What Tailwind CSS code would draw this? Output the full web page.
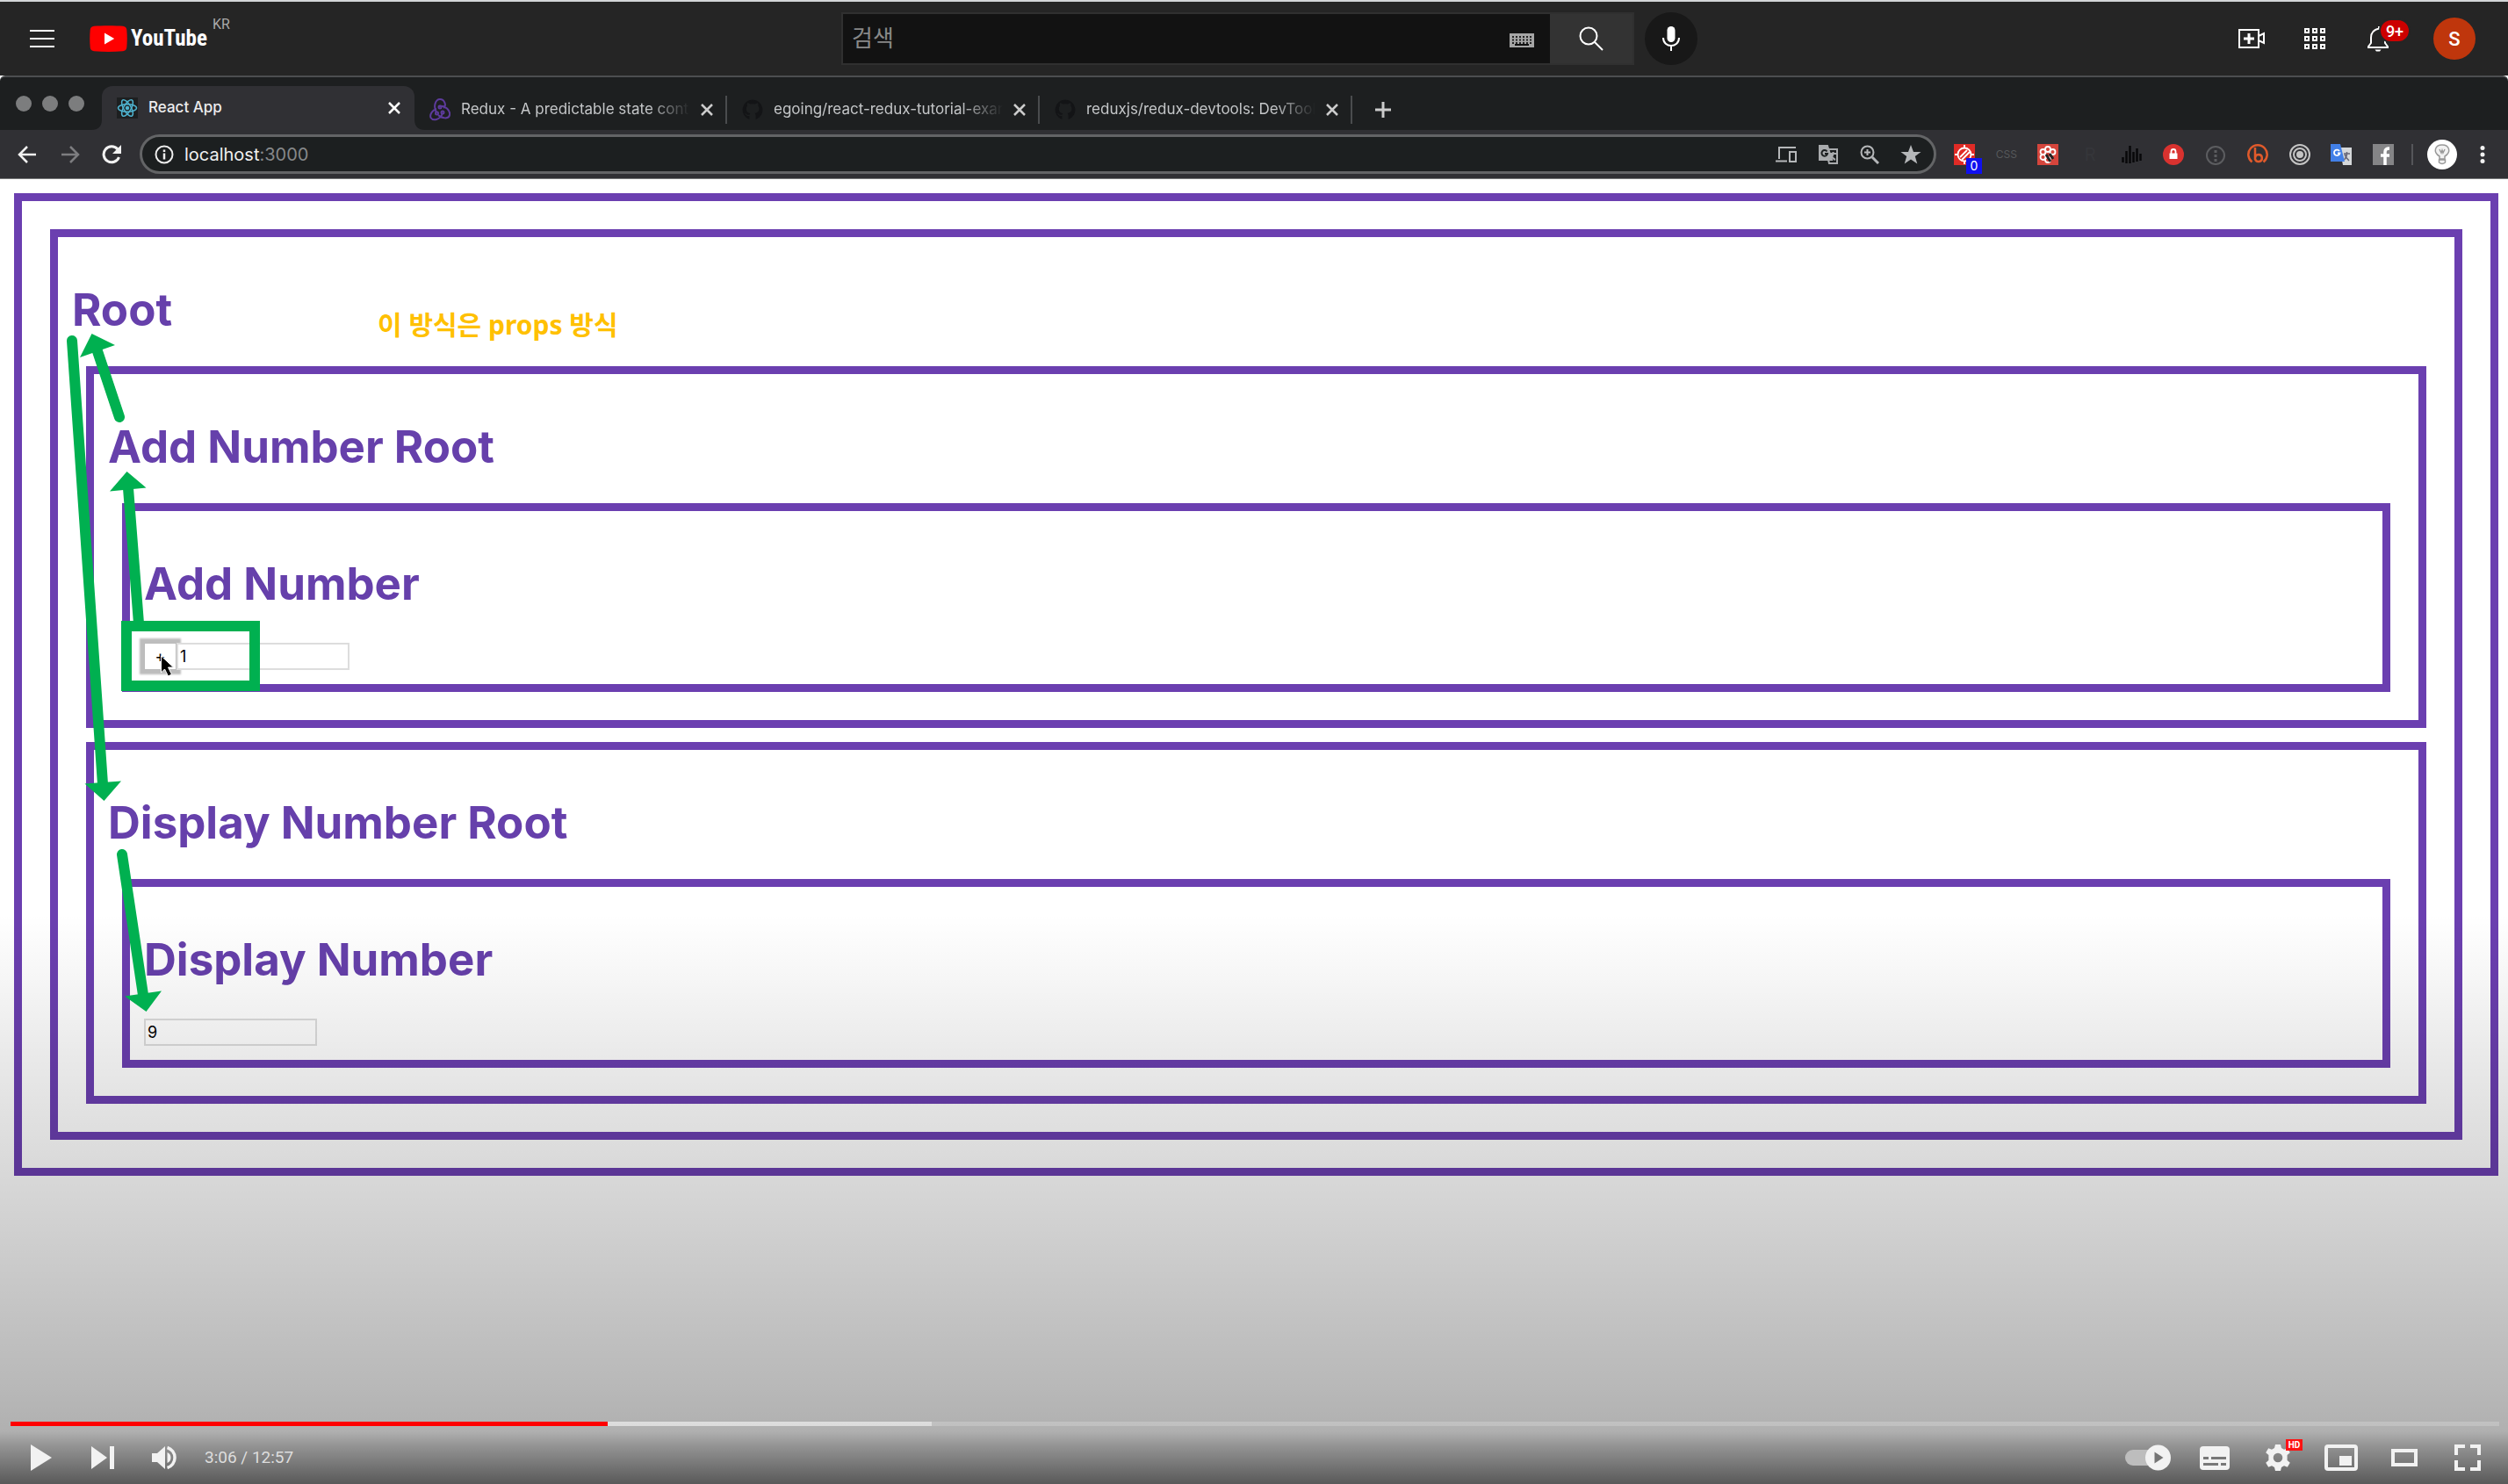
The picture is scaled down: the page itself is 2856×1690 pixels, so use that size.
<!DOCTYPE html>
<html lang="ko">
<head>
<meta charset="utf-8">
<meta name="viewport" content="width=device-width, initial-scale=1">
<title>YouTube</title>
<script src="https://cdn.jsdelivr.net/npm/@tailwindcss/browser@4"></script>
</head>
<body class="flex min-h-screen flex-col bg-[#252525] font-['Roboto','Noto_Sans_CJK_KR',sans-serif]">

<!-- Site header -->
<header class="grid h-[86px] grid-cols-[958fr_975fr_923fr] items-center border-t-2 border-[#d3d6d8] text-white">
  <div class="flex items-center pl-[34px]">
    <button aria-label="메뉴" class="mr-10 block"><svg width="28" height="22" viewBox="0 0 28 22" stroke="#fff" stroke-width="2"><path d="M0 2h28M0 11h28M0 20h28"/></svg></button>
    <a href="#" class="flex items-center gap-1">
      <svg width="43" height="30" viewBox="0 0 43 30"><path fill="#f00" d="M5 .8C13 0 30 0 38 .8q3.800.5 4.300 4.300.9 10 0 19.800-.5 3.800-4.300 4.300-16.500 1.500-33 0Q1.200 28.700.7 24.900-.2 15 .7 5.100 1.200 1.300 5 .8z"/><path fill="#fff" d="M17 8.500 28.200 15 17 21.500z"/></svg>
      <span class="text-[25px] leading-[30px] font-bold font-['Roboto_Condensed','Liberation_Sans_Narrow','Open_Sans_Condensed','Roboto',sans-serif]">YouTube</span>
    </a>
    <span class="mb-8 ml-1.5 text-base leading-4 text-[#aaa]">KR</span>
  </div>
  <form class="flex items-center" onsubmit="return false">
    <div class="flex h-[60px] flex-1 items-center border-2 border-r-0 border-[#303030] bg-[#121212] pr-[18px]">
      <input type="text" aria-label="검색" placeholder="검색" class="h-full min-w-0 flex-1 bg-transparent pl-[10px] text-[26px] text-white outline-none placeholder:text-[#888]">
      <button type="button" aria-label="키보드" class="mt-1"><svg width="28" height="16" viewBox="0 0 28 16"><path fill="#a5a5a5" d="M0 0h28v16H0z"/><path stroke="#222" stroke-width="2" stroke-dasharray="2 2" d="M3 4h23M3 7.500h23M3 11h23"/><path stroke="#111" stroke-width="2" d="M6 13h16"/></svg></button>
    </div>
    <button aria-label="검색 실행" class="flex h-[60px] w-[96px] items-center justify-center border-y-2 border-r-2 border-[#303030] bg-[#333]"><svg width="28" height="28" viewBox="0 0 28 28" fill="none" stroke="#fff" stroke-width="2"><circle cx="11" cy="11" r="9.500"/><path d="m18 18 9 9"/></svg></button>
    <button type="button" aria-label="음성 검색" class="ml-3 flex size-[60px] items-center justify-center rounded-full bg-[#181818]"><svg width="20" height="28" viewBox="0 0 20 28"><rect x="5.500" width="9" height="18" rx="4.500" fill="#fff"/><path d="M1 13c0 12 18 12 18 0M10 22v6" fill="none" stroke="#fff" stroke-width="2"/></svg></button>
  </form>
  <div class="flex items-center justify-end pr-[37px]">
    <button aria-label="만들기" class="flex w-[72px] justify-center"><svg width="30" height="22" viewBox="0 0 30 22" fill="none" stroke="#fff" stroke-width="2"><path d="M1 1h22v20H1zM23 8l6-3v11l-6-3"/><path stroke-width="3" d="M12 5v12M6 11h12"/></svg></button>
    <button aria-label="앱" class="flex w-[72px] justify-center"><svg width="24" height="24" viewBox="0 0 24 24" fill="none" stroke="#fff" stroke-width="2"><path d="M1 1h4v4H1zM10 1h4v4h-4zM19 1h4v4h-4zM1 10h4v4H1zM10 10h4v4h-4zM19 10h4v4h-4zM1 19h4v4H1zM10 19h4v4h-4zM19 19h4v4h-4z"/></svg></button>
    <button aria-label="알림" class="relative mr-[27px] flex w-[72px] justify-center"><svg width="24" height="30" viewBox="0 0 24 30" fill="none" stroke="#fff" stroke-width="2"><path d="M13 3.500C6 5 4 9 4 14v6l-3 4v1h22v-1l-3-4v-6c0-5-2-9-7-10.500V1"/><path d="M8.500 27.500h7l-1.500 2h-4z" fill="#fff" stroke="none"/></svg><span class="absolute -top-2 left-[37px] flex h-7 w-9 items-center justify-center rounded-full border-2 border-[#252525] bg-[#c00] text-[18px] font-medium">9+</span></button>
    <button aria-label="계정" class="flex size-12 items-center justify-center rounded-full bg-[#bf360c] text-[22px] font-medium">S</button>
  </div>
</header>

<!-- Video -->
<main class="relative flex flex-1 flex-col bg-white font-['Inter','Noto_Sans_CJK_KR',sans-serif]">
  <div class="flex h-[62px] rounded-t-md border-t-2 border-[#4c4e50] bg-[#1d1f20] text-[17px] text-[#c4c6c8]">
    <div class="flex w-[116px] gap-3 pt-[21px] pl-[18px]"><i class="size-[18px] rounded-full bg-[#7c7d7e]"></i><i class="size-[18px] rounded-full bg-[#7c7d7e]"></i><i class="size-[18px] rounded-full bg-[#7c7d7e]"></i></div>
    <div class="relative mt-[10px] flex w-[356px] items-center rounded-t-xl bg-[#303034] pr-4 pl-[17px] text-[#ececee]">
      <svg class="absolute bottom-0 -left-3" width="12" height="12"><path fill="#303034" d="M12 0v12H0Q12 12 12 0z"/></svg>
      <svg class="absolute -right-3 bottom-0" width="12" height="12"><path fill="#303034" d="M0 0v12h12Q0 12 0 0z"/></svg>
      <svg width="24" height="24" viewBox="0 0 24 24" fill="none" stroke="#4fb3cf" stroke-width="1.500"><path fill="#1d1f20" stroke="none" d="M0 0h24v24H0z"/><ellipse cx="12" cy="12" rx="10.500" ry="4.200"/><ellipse cx="12" cy="12" rx="10.500" ry="4.200" transform="rotate(60 12 12)"/><ellipse cx="12" cy="12" rx="10.500" ry="4.200" transform="rotate(120 12 12)"/><circle cx="12" cy="12" r="1.500" fill="#4fb3cf"/></svg>
      <a href="#" class="ml-3 flex-1 font-medium">React App</a>
      <button aria-label="탭 닫기"><svg width="14" height="14" viewBox="0 0 14 14" stroke="#fff" stroke-width="2.500"><path d="m1 1 12 12M13 1 1 13"/></svg></button>
    </div>
    <div class="mt-[21px] flex h-8 w-[356px] items-center border-r-2 border-[#4a4c4e] pr-3.5 pl-[17px]">
      <svg width="24" height="26" viewBox="0 0 24 26" fill="none" stroke="#5d3b9c" stroke-width="2"><path d="M8 16C4 9 7 1 12 1s8 7 4 10M10 9c9-2 14 6 13 10-1 5-9 4-13 0M15 17c-3 8-11 9-13.500 5C0 18 4 13 8 12"/><circle cx="8.500" cy="17" r="1.500"/><circle cx="15" cy="16" r="1.500"/><circle cx="12" cy="10" r="1.500"/></svg>
      <a href="#" class="ml-3 min-w-0 flex-1 whitespace-nowrap [mask-image:linear-gradient(to_right,#000_82%,transparent)]">Redux - A predictable state cont</a>
      <button aria-label="탭 닫기" class="ml-3"><svg width="14" height="14" viewBox="0 0 14 14" stroke="#ccc" stroke-width="2.500"><path d="m1 1 12 12M13 1 1 13"/></svg></button>
    </div>
    <div class="mt-[21px] flex h-8 w-[356px] items-center border-r-2 border-[#4a4c4e] pr-3.5 pl-[17px]">
      <svg width="24" height="24" viewBox="0 0 24 24"><path fill="#131416" d="M12 .5a11.500 11.500 0 0 0-3.600 22.400v-4c-4 .8-4.400-2.400-5.400-3 2-.2 2 2.600 5.500 1.800l.6-1.700C5 15.500 3.500 11 6 7.500c-.4-1-.3-2.300.2-3.300 1 0 2.200.6 3.200 1.300a12 12 0 0 1 5.600 0c1-.7 2-1.300 3-1.300.6 1 .6 2.300.3 3.300 2.500 3.500 1 8-3.500 8.500l.8 2v4.900A11.500 11.500 0 0 0 12 .5z"/></svg>
      <a href="#" class="ml-3 min-w-0 flex-1 whitespace-nowrap [mask-image:linear-gradient(to_right,#000_82%,transparent)]">egoing/react-redux-tutorial-exar</a>
      <button aria-label="탭 닫기" class="ml-3"><svg width="14" height="14" viewBox="0 0 14 14" stroke="#ccc" stroke-width="2.500"><path d="m1 1 12 12M13 1 1 13"/></svg></button>
    </div>
    <div class="mt-[21px] flex h-8 w-[356px] items-center border-r-2 border-[#4a4c4e] pr-3.5 pl-[17px]">
      <svg width="24" height="24" viewBox="0 0 24 24"><path fill="#131416" d="M12 .5a11.500 11.500 0 0 0-3.600 22.400v-4c-4 .8-4.400-2.400-5.400-3 2-.2 2 2.600 5.500 1.800l.6-1.700C5 15.500 3.500 11 6 7.500c-.4-1-.3-2.300.2-3.300 1 0 2.200.6 3.200 1.300a12 12 0 0 1 5.600 0c1-.7 2-1.300 3-1.300.6 1 .6 2.300.3 3.300 2.500 3.500 1 8-3.500 8.500l.8 2v4.900A11.500 11.500 0 0 0 12 .5z"/></svg>
      <a href="#" class="ml-3 min-w-0 flex-1 whitespace-nowrap [mask-image:linear-gradient(to_right,#000_82%,transparent)]">reduxjs/redux-devtools: DevTools</a>
      <button aria-label="탭 닫기" class="ml-3"><svg width="14" height="14" viewBox="0 0 14 14" stroke="#ccc" stroke-width="2.500"><path d="m1 1 12 12M13 1 1 13"/></svg></button>
    </div>
    <button aria-label="새 탭" class="mt-[21px] ml-[26px] h-8"><svg width="18" height="18" viewBox="0 0 18 18" stroke="#ccc" stroke-width="3"><path d="M9 0v18M0 9h18"/></svg></button>
  </div>

  <div class="flex h-14 items-center border-b border-[#77787a] bg-[#303034] pr-[26px] pl-5">
    <button aria-label="뒤로"><svg width="22" height="20" viewBox="0 0 22 20" fill="none" stroke="#f2f2f2" stroke-width="2.500"><path d="M21 10H2M11 1l-9 9 9 9"/></svg></button>
    <button aria-label="앞으로" class="ml-[27px]"><svg width="22" height="20" viewBox="0 0 22 20" fill="none" stroke="#7d7d80" stroke-width="2.500"><path d="M1 10h19M11 1l9 9-9 9"/></svg></button>
    <button aria-label="새로고침" class="ml-6"><svg width="24" height="22" viewBox="0 0 24 22" fill="none" stroke="#f2f2f2" stroke-width="3"><path d="M20.500 14A9 9 0 1 1 19 5"/><path fill="#f2f2f2" stroke="none" d="M23 0v10H13z"/></svg></button>
    <div class="ml-5 flex h-[45px] flex-1 items-center rounded-full border-[3px] border-[#636466] bg-[#1c1f20] pr-3.5 pl-3.5">
      <svg width="22" height="22" viewBox="0 0 22 22" fill="none" stroke="#eee" stroke-width="2"><circle cx="11" cy="11" r="9.500"/><path stroke-width="2.500" d="M11 9.500v7M11 5.500V8"/></svg>
      <div role="textbox" aria-label="주소" class="ml-3 flex-1 text-[20px] text-[#86888a]"><span class="text-[#f0f0f0]">localhost</span>:3000</div>
      <div class="flex items-center gap-6">
        <svg width="24" height="20" viewBox="0 0 24 20" fill="none" stroke="#b5b7b9" stroke-width="2"><path d="M23 2H4v13M0 17.500h13M16 7h7v11h-7z"/></svg>
        <svg width="24" height="24" viewBox="0 0 24 24" fill="none" stroke="#a9abad" stroke-width="2"><path fill="#a9abad" d="M2 2h9l5 16H2z"/><path d="M13 6h9v16h-9l-1-4M14 11h7M17.500 9v2c-.5 3-2 5-3 6M15 12c1 3 3 5 5 6"/><path stroke="#1c1f20" d="M10.500 8.500A3.300 3.300 0 1 0 11 11H8"/></svg>
        <svg width="22" height="22" viewBox="0 0 22 22" fill="none" stroke="#b5b7b9" stroke-width="2"><circle cx="8.500" cy="8.500" r="7"/><path d="M5 8.500h7M8.500 5v7"/><path stroke-width="3" d="m14 14 7 7"/></svg>
        <svg width="24" height="22" viewBox="0 0 24 22"><path fill="#b5b7b9" d="m12 0 3 8h8.500l-6.700 5 2.500 8.500L12 16.500l-7.300 5L7.200 13 .5 8H9z"/></svg>
      </div>
    </div>
    <div class="ml-5 flex w-[501px] items-center justify-between">
      <span class="relative"><svg width="24" height="24" viewBox="0 0 24 24"><path fill="#e02b26" d="M0 0h24v24H0z"/><g fill="none" stroke="#fff" stroke-width="1.800"><circle cx="12" cy="12" r="7.500"/><path d="M12 1v4M12 19v4M1 12h4M19 12h4M7 15l8-8M9 18l9-9"/></g></svg><span class="absolute top-4 left-3.5 flex h-[18px] w-[18px] items-center justify-center bg-[#1010f0] text-sm leading-none text-white">0</span></span>
      <span class="w-6 text-center text-[12px] text-[#56585a]">CSS</span>
      <svg width="24" height="24" viewBox="0 0 24 24"><path fill="#d5453c" d="M0 0h24v24H0z"/><g fill="none" stroke="#fff" stroke-width="1.800"><circle cx="12" cy="6" r="3"/><circle cx="6.500" cy="9" r="3"/><circle cx="17.500" cy="9" r="3"/><circle cx="6.500" cy="15" r="3"/><circle cx="12" cy="18" r="3"/></g><path stroke="#222" stroke-width="3" d="m10 12 5 8M14 11l4 6"/></svg>
      <span class="w-6 text-center text-[20px] text-[#35363a]">R</span>
      <svg width="24" height="24" viewBox="0 0 24 24" stroke="#08080a" stroke-width="2.500"><path d="M1.500 21v-6M5.500 22V8M9.500 22V2M13.500 21V9M17.500 20V5M21.500 19v-8"/></svg>
      <svg width="24" height="24" viewBox="0 0 24 24"><circle cx="12" cy="12" r="12" fill="#d9322f"/><path fill="#fff" d="M7.500 10.500h9V17h-9z"/><path fill="none" stroke="#fff" stroke-width="1.800" d="M9.500 11V8.500a2.500 2.500 0 0 1 5 0V11"/></svg>
      <svg class="mt-0.5" width="24" height="24" viewBox="0 0 24 24" fill="none" stroke="#5c5d60" stroke-width="2"><circle cx="12" cy="12" r="10"/><path stroke-width="3" stroke-dasharray="3 2" d="M12 6v13"/></svg>
      <svg width="24" height="24" viewBox="0 0 24 24" fill="none" stroke="#e05a2b" stroke-width="2.500"><path d="M5.500 20.500A10.700 10.700 0 1 1 18.500 20.500"/><path d="M9 4v14M9 17a4 4 0 1 0 4-5q-4 0-4 5"/></svg>
      <svg width="24" height="24" viewBox="0 0 24 24" fill="none" stroke="#c4c4c4" stroke-width="2"><circle cx="12" cy="12" r="11"/><circle cx="12" cy="12" r="7"/><circle cx="12" cy="12" r="3" fill="#c4c4c4"/></svg>
      <svg width="24" height="24" viewBox="0 0 24 24"><path fill="#d5d8da" d="M10 4h14v20H14z"/><path fill="none" stroke="#667" stroke-width="1.500" d="M15 11h7M18.500 9v2c0 3-1 5-3 7M16 12c1 3 3 5 5 7"/><path fill="#4280e8" d="M0 0h11l5 20H0z"/><path fill="none" stroke="#fff" stroke-width="1.800" d="M10 8a3.300 3.300 0 1 0 .5 2.500H8"/></svg>
      <svg width="24" height="24" viewBox="0 0 24 24"><path fill="#858587" d="M0 0h24v24H0z"/><path fill="none" stroke="#fff" stroke-width="3.500" d="M14 24V9q0-4 5-4M9 13h10"/></svg>
    </div>
    <i class="ml-5 h-6 w-0.5 bg-[#55565a]"></i>
    <button aria-label="프로필" class="ml-4"><svg width="34" height="34" viewBox="0 0 34 34"><circle cx="17" cy="17" r="17" fill="#fff"/><path fill="#f2f2f2" stroke="#999" stroke-width="1.500" d="M14 22v-3C6 14 9 6 17 6s11 8 3 13v3zM13.500 23h7v3q-3.500 3-7 0zM14 11l2 4 1-3 1 3 2-4"/></svg></button>
    <button aria-label="더보기" class="ml-[26px]"><svg width="6" height="20" viewBox="0 0 6 20" fill="#f2f2f2"><circle cx="3" cy="2.500" r="2.500"/><circle cx="3" cy="10" r="2.500"/><circle cx="3" cy="17.500" r="2.500"/></svg></button>
  </div>

  <!-- Nested component boxes of the React page -->
  <div class="mt-4 mr-[11px] mb-4 ml-4 border-[9px] border-[#6b3fb0] p-8 text-[#6640ab]">
    <section class="border-[9px] border-[#6b3fb0] p-4">
      <h1 class="mt-9 mb-[33px] text-[51px] leading-[62px] font-bold">Root</h1>
      <div class="mx-4 mb-4 flex flex-col gap-4">
        <section class="border-[9px] border-[#6b3fb0] p-4">
          <h1 class="mt-9 mb-[33px] text-[51px] leading-[62px] font-bold">Add Number Root</h1>
          <section class="mx-4 mb-4 border-[9px] border-[#6b3fb0] p-4">
            <h1 class="mt-9 mb-9 text-[51px] leading-[62px] font-bold">Add Number</h1>
            <div class="flex h-[31px] text-[18px] text-black">
              <button class="w-[37px] border border-[#bbb] bg-white shadow-[0_0_2px_5px_#bdbdbd]">+</button>
              <input type="text" value="1" aria-label="증가량" class="relative w-[197px] border-2 border-[#ddd] bg-white px-0.5">
            </div>
          </section>
        </section>
        <section class="border-[9px] border-[#6b3fb0] p-4">
          <h1 class="mt-9 mb-[33px] text-[51px] leading-[62px] font-bold">Display Number Root</h1>
          <section class="mx-4 mb-4 border-[9px] border-[#6b3fb0] p-4">
            <h1 class="mt-9 mb-9 text-[51px] leading-[62px] font-bold">Display Number</h1>
            <div class="flex h-[31px] text-[18px] text-black">
              <input type="text" value="9" readonly aria-label="표시 값" class="w-[197px] border-2 border-[#ddd] bg-white px-0.5">
            </div>
          </section>
        </section>
      </div>
    </section>
  </div>

  <!-- Player shade -->
  <div class="pointer-events-none absolute inset-x-0 bottom-0 h-[650px] bg-[linear-gradient(to_bottom,transparent,rgb(0_0_0/0.04)_80px,rgb(0_0_0/0.08)_150px,rgb(0_0_0/0.165)_320px,rgb(0_0_0/0.28)_540px,rgb(0_0_0/0.31)_590px,rgb(0_0_0/0.42)_606px,rgb(0_0_0/0.65)_650px)]"></div>

  <!-- Annotations drawn over the video -->
  <p class="absolute top-[250px] left-[430px] font-['Noto_Sans','Noto_Sans_CJK_KR',sans-serif] text-[30px] leading-[68px] font-bold text-[#ffc000]">이 방식은 props 방식</p>
  <svg class="pointer-events-none absolute top-0 left-0" width="320" height="1100" viewBox="0 86 320 1100" fill="#00b050">
    <g fill="none" stroke="#00b050" stroke-width="12" stroke-linecap="round"><path d="M136 475 111 400M82 388l35 505M158 710 146 556M139 973l24 160"/><path stroke-linecap="butt" d="M144 713h146v68H144z"/></g>
    <path d="m104.500 380 26.500 13-40 14zM118.500 912l-22-19.500 41.500-3zM144.500 537l22 18.500-41.500 4zM166.500 1152l-24.500-17.500 42-6z"/>
    <path fill="#000" stroke="#fff" stroke-width="1" d="m183.500 747 0 19 4-4 4 8 4-2-4-8h6z"/>
  </svg>

  <!-- Player controls -->
  <div class="relative mt-auto mr-[10px] ml-3 font-['Roboto',sans-serif]">
    <div class="relative h-[5px] bg-white/20">
      <div class="absolute inset-y-0 left-0 bg-white/45" style="width:37%"></div>
      <div class="absolute inset-y-0 left-0 bg-[#f00]" style="width:24%"></div>
      <input type="range" min="0" max="777" value="186" aria-label="탐색" class="absolute inset-0 h-full w-full opacity-0">
    </div>
    <div class="mt-1.5 flex h-[60px] items-center text-[#f2f2f2]">
      <button aria-label="재생" class="flex w-[70px] justify-center"><svg width="24" height="30" viewBox="0 0 24 30" fill="currentColor"><path d="m0 0 24 15L0 30z"/></svg></button>
      <button aria-label="다음" class="flex w-[70px] justify-center"><svg width="26" height="26" viewBox="0 0 26 26" fill="currentColor"><path d="m0 0 18 13L0 26zM21 0h5v26h-5z"/></svg></button>
      <button aria-label="음소거" class="flex w-[70px] justify-center"><svg width="28" height="28" viewBox="0 0 28 28" fill="currentColor"><path d="M0 9h6l9-8v26l-9-8H0zM17.500 8a6.500 6.500 0 0 1 0 12z"/><path fill="none" stroke="currentColor" stroke-width="3.500" d="M17.500 2.500a12 12 0 0 1 0 23"/></svg></button>
      <span class="flex-1 pl-[11px] text-[19px] text-[#ddd]">3:06 / 12:57</span>
      <label class="flex w-20 justify-center"><input type="checkbox" checked aria-label="자동재생" class="sr-only"><svg width="52" height="30" viewBox="0 0 52 30"><rect y="6" width="44" height="18" rx="9" fill="#bdbdbd"/><circle cx="37.500" cy="15" r="14.500" fill="#f2f2f2"/><path fill="#757575" d="m33.500 8.500 10 6.500-10 6.500z"/></svg></label>
      <button aria-label="자막" class="flex w-[72px] justify-center"><svg width="34" height="27" viewBox="0 0 34 27"><rect width="34" height="27" rx="4" fill="currentColor"/><path stroke="#787878" stroke-width="3" d="M4 13.500h6M13 13.500h17M4 20.500h17M24 20.500h6"/></svg></button>
      <button aria-label="설정" class="relative flex w-[72px] justify-center"><svg width="30" height="30" viewBox="-15 -15 30 30" fill="currentColor"><path fill-rule="evenodd" d="m-3-15h6l1 4 3 1.700 3.800-1.500 3 5-3.200 2.800v6l3.200 2.800-3 5-3.800-1.500-3 1.700-1 4h-6l-1-4-3-1.700-3.800 1.500-3-5 3.200-2.800v-6l-3.200-2.800 3-5 3.800 1.500 3-1.700zM0-5.300A5.300 5.300 0 1 0 0 5.300 5.300 5.300 0 1 0 0-5.300z"/></svg><span class="absolute -top-1.5 left-[45px] flex h-[13px] w-[19px] items-center justify-center bg-[#f11] text-[10px] font-bold text-white">HD</span></button>
      <button aria-label="소형 플레이어" class="flex w-[72px] justify-center"><svg width="38" height="30" viewBox="0 0 38 30"><rect x="2" y="2" width="34" height="26" rx="2" fill="none" stroke="currentColor" stroke-width="4"/><path fill="currentColor" d="M17 13h14v11H17z"/></svg></button>
      <button aria-label="영화관 모드" class="flex w-[72px] justify-center"><svg width="30" height="20" viewBox="0 0 30 20" fill="none" stroke="currentColor" stroke-width="4"><path d="M2 2h26v16H2z"/></svg></button>
      <button aria-label="전체화면" class="flex w-[72px] justify-center"><svg width="30" height="30" viewBox="0 0 30 30" fill="none" stroke="currentColor" stroke-width="4"><path d="M12 2H2v10M18 2h10v10M12 28H2V18M18 28h10V18"/></svg></button>
    </div>
  </div>
</main>
</body>
</html>
